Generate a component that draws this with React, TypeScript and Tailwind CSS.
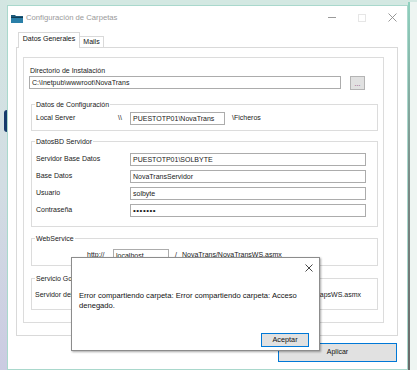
import type { ReactNode } from 'react'

const FIELD = 'flex h-[13px] items-center border border-[#acacac] bg-white px-[2px] leading-none text-[#1a1a1a]'

function Group({ title, className, children }: { title: string; className: string; children: ReactNode }) {
  return (
    <div className={`flex flex-col border border-[#dcdcdc] ${className}`}>
      <span className="-mt-[5px] ml-[3px] h-[9px] self-start bg-white px-px leading-[9px] text-[#1a1a1a]">{title}</span>
      {children}
    </div>
  )
}

function FolderIcon() {
  return (
    <svg width="12" height="9" viewBox="0 0 12 9">
      <path d="M0 1h4l1 1h7v7H0z" fill="#1d5a7a" />
      <path d="M0 3h12v6H0z" fill="#2a7fa8" />
      <path d="M0 3h12v1H0z" fill="#0f3c55" />
    </svg>
  )
}

export default function App() {
  return (
    <div className="relative h-[377px] w-[417px] overflow-hidden bg-white font-['Liberation_Sans',Arial,sans-serif] text-[7px]">
      <div className="flex h-[370px] bg-[#d3e8e2]">
        {/* franja izquierda */}
        <div className="flex w-[7px] flex-col bg-gradient-to-b from-[#d3e6e2] via-[#d2dde3] to-[#cbcbe2] pt-[110px]">
          <div className="ml-[4px] h-[22px] w-[3px] rounded-l-[3px] bg-[#163a6b]" />
        </div>

        {/* ventana */}
        <div className="mt-[5px] flex h-[365px] w-[401px] flex-col border border-[#a9d8cc] bg-white">
          {/* barra de titulo */}
          <div className="flex h-[23px] shrink-0 items-center">
            <div className="ml-[3px] mt-[1px]">
              <FolderIcon />
            </div>
            <span className="ml-[3px] text-[7.7px] text-[#9a9a9a]">Configuración de Carpetas</span>
            <div className="ml-auto flex h-full">
              <div className="flex w-[30px] items-center justify-center">
                <div className="h-px w-[8px] bg-[#9a9a9a]" />
              </div>
              <div className="flex w-[30px] items-center justify-center">
                <div className="h-[8px] w-[8px] border border-[#e6e6e6]" />
              </div>
              <div className="flex w-[30px] items-center justify-center">
                <svg width="9" height="9" viewBox="0 0 9 9">
                  <path d="M0.5 0.5l8 8M8.5 0.5l-8 8" stroke="#8c8c8c" strokeWidth="0.9" />
                </svg>
              </div>
            </div>
          </div>

          {/* pestañas */}
          <div className="ml-[9px] mt-[3px] flex items-end">
            <div className="relative z-10 -mb-px ml-px flex h-[16px] w-[62px] items-center justify-center border border-b-0 border-[#d9d9d9] bg-white pb-[2px] text-[#111]">
              Datos Generales
            </div>
            <div className="flex h-[11px] w-[24px] items-center justify-center border border-b-0 border-l-0 border-[#d9d9d9] bg-white text-[#111]">
              Mails
            </div>
          </div>

          <div className="ml-[8px] flex h-[289px] w-[382px] flex-col border border-[#d9d9d9] bg-white">
            <div className="ml-[6px] mt-[9px] flex h-[266px] w-[361px] flex-col border border-[#dcdcdc]">
              <span className="ml-[6px] mt-[8px] h-[9px] leading-[9px] text-[#1a1a1a]">Directorio de Instalación</span>
              <div className="ml-[5px] mt-px flex h-[14px] items-start">
                <div className={`${FIELD} w-[312px]`}>C:\Inetpub\wwwroot\NovaTrans</div>
                <div className="ml-[9px] flex h-[14px] w-[15px] items-center justify-center border border-[#b4b4b4] bg-[#e1e1e1] leading-none text-[#7a3a6a]">
                  ...
                </div>
              </div>

              <Group title="Datos de Configuración" className="ml-[7px] mt-[14px] w-[347px] pb-[5px]">
                <div className="mt-[3px] flex h-[13px] items-center">
                  <span className="ml-[4px] w-[82px] text-[#1a1a1a]">Local Server</span>
                  <span className="w-[12px] text-[#1a1a1a]">\\</span>
                  <div className={`${FIELD} w-[95px]`}>PUESTOTP01\NovaTrans</div>
                  <span className="ml-[7px] text-[#1a1a1a]">\Ficheros</span>
                </div>
              </Group>

              <Group title="DatosBD Servidor" className="ml-[7px] mt-[10px] w-[347px] pb-[9px]">
                <div className="mt-[7px] flex flex-col gap-[4px]">
                  {[
                    ['Servidor Base Datos', 'PUESTOTP01\\SOLBYTE'],
                    ['Base Datos', 'NovaTransServidor'],
                    ['Usuario', 'solbyte'],
                    ['Contraseña', '•••••••'],
                  ].map(([label, value]) => (
                    <div key={label} className="flex h-[13px] items-center">
                      <span className="ml-[4px] w-[94px] text-[#1a1a1a]">{label}</span>
                      <div className={`${FIELD} w-[236px] ${label === 'Contraseña' ? 'text-[8px] tracking-[0.5px]' : ''}`}>
                        {value}
                      </div>
                    </div>
                  ))}
                </div>
              </Group>

              <Group title="WebService" className="ml-[7px] mt-[11px] w-[347px] pb-[3px]">
                <div className="mt-[6px] flex h-[13px] items-center">
                  <span className="ml-[55px] w-[26px] text-[#1a1a1a]">http://</span>
                  <div className={`${FIELD} w-[56px]`}>localhost</div>
                  <span className="ml-[6px] text-[#1a1a1a]">/</span>
                  <span className="ml-[5px] text-[#1a1a1a]">NovaTrans/NovaTransWS.asmx</span>
                </div>
              </Group>

              <Group title="Servicio GoogleMaps" className="ml-[7px] mt-[12px] w-[347px] pb-[7px]">
                <div className="mt-[6px] flex h-[13px] items-center">
                  <span className="ml-[3px] text-[#1a1a1a]">Servidor del Servicio</span>
                  <span className="ml-auto mr-[16px] text-[#1a1a1a]">/ NovaTrans/GoogleMapsWS.asmx</span>
                </div>
              </Group>
            </div>
          </div>

          <div className="mr-[10px] mt-[7px] flex h-[19px] w-[119px] items-center justify-center self-end border border-[#0078d7] bg-[#e1e1e1] text-[#111]">
            Aplicar
          </div>
        </div>

        {/* franja derecha */}
        <div className="mt-[2px] flex flex-1">
          <div className="w-[2px] bg-gradient-to-b from-[#8fd1bf] via-[#7a8a86] to-[#6a6a6a]" />
          <div className="flex-1 bg-[#eef5f2]" />
        </div>
      </div>

      {/* dialogo de error */}
      <div className="absolute left-[71px] top-[257px] flex h-[94px] w-[249px] flex-col border border-[#8c8c8c] bg-white shadow-[1px_1px_2px_rgba(0,0,0,0.35)]">
        <div className="flex h-[18px] justify-end pr-[6px] pt-[6px]">
          <svg width="8" height="8" viewBox="0 0 8 8">
            <path d="M0.5 0.5l7 7M7.5 0.5l-7 7" stroke="#333" strokeWidth="0.9" />
          </svg>
        </div>
        <p className="ml-[7px] mt-[15px] text-[7.6px] leading-[10px] text-[#111]">
          Error compartiendo carpeta: Error compartiendo carpeta: Acceso
          <br />
          denegado.
        </p>
        <div className="mr-[10px] mt-auto mb-[3px] flex h-[14px] w-[48px] items-center justify-center self-end border border-[#0078d7] bg-[#e1e1e1] text-[7.3px] text-[#111]">
          Aceptar
        </div>
      </div>
    </div>
  )
}
